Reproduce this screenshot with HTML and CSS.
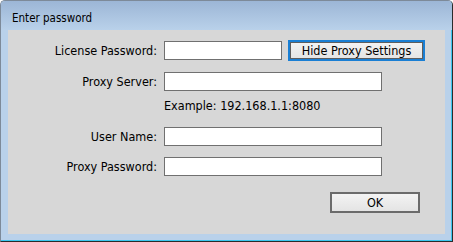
FILE: index.html
```html
<!DOCTYPE html>
<html>
  <head>
    <title>Enter password</title>
    <link rel="stylesheet" href="styles.css">
  </head>
  <body>
    <div class="window">
      <div class="titlebar">Enter password</div>
      <div class="client">
        <div class="row first">
          <label class="label">License Password:</label>
          <input class="field short" type="password">
          <button class="btn focused">Hide Proxy Settings</button>
        </div>
        <div class="row">
          <label class="label">Proxy Server:</label>
          <input class="field" type="text">
        </div>
        <div class="row hint">
          <span class="label"></span>
          <span>Example: 192.168.1.1:8080</span>
        </div>
        <div class="row">
          <label class="label">User Name:</label>
          <input class="field" type="text">
        </div>
        <div class="row">
          <label class="label">Proxy Password:</label>
          <input class="field" type="password">
        </div>
        <div class="actions">
          <button class="btn ok">OK</button>
        </div>
      </div>
    </div>
  </body>
</html>
```

FILE: styles.css
```css
body {
  margin: 0;
  font-family: "DejaVu Sans Condensed", "DejaVu Sans", sans-serif;
  font-size: 12.5px;
  color: #000;
}

.window {
  box-sizing: border-box;
  width: 453px;
  height: 242px;
  border: 1px solid #2b2b2b;
  border-top-color: #7d8a99;
  border-left-color: #7d8a99;
  border-radius: 5px 5px 0 0;
  background: #b9d1ea;
  box-shadow: inset -1px -1px 0 #3cc6ee;
  display: flex;
  flex-direction: column;
}

.titlebar {
  height: 24px;
  line-height: 24px;
  padding: 5px 0 0 11px;
  font-size: 11.5px;
  background: linear-gradient(#9cb6d6, #b9d1ea);
  border-radius: 4px 4px 0 0;
}

.client {
  margin: 0 7px;
  height: 204px;
  background: #d7d7d7;
  padding-top: 10px;
  box-sizing: border-box;
}

.row {
  display: flex;
  align-items: center;
  gap: 7px;
  margin-top: 11px;
}

.row.first {
  margin-top: 0;
  height: 21px;
}

.label {
  width: 149px;
  text-align: right;
  flex-shrink: 0;
}

.field {
  box-sizing: border-box;
  width: 218px;
  height: 19px;
  margin: 0;
  border: 1px solid #707070;
  background: #fff;
  padding: 0 3px;
}

.field.short {
  width: 118px;
}

.hint {
  margin-top: 6px;
  height: 16px;
}

.hint + .row {
  margin-top: 14px;
}

.btn {
  box-sizing: border-box;
  height: 21px;
  margin: 0;
  font-family: inherit;
  font-size: 12.5px;
  color: #000;
  border: 2px solid #6b6b6b;
  background: linear-gradient(#f3f3f3, #e4e4e4);
  padding: 0;
}

.btn.focused {
  width: 137px;
  margin-left: -1px;
  border-color: #1a7fd4;
  box-shadow: inset 0 0 0 1px #5e5e5e;
}

.actions {
  display: flex;
  justify-content: flex-end;
  padding-right: 25px;
  margin-top: 16px;
}

.btn.ok {
  width: 90px;
}
```
